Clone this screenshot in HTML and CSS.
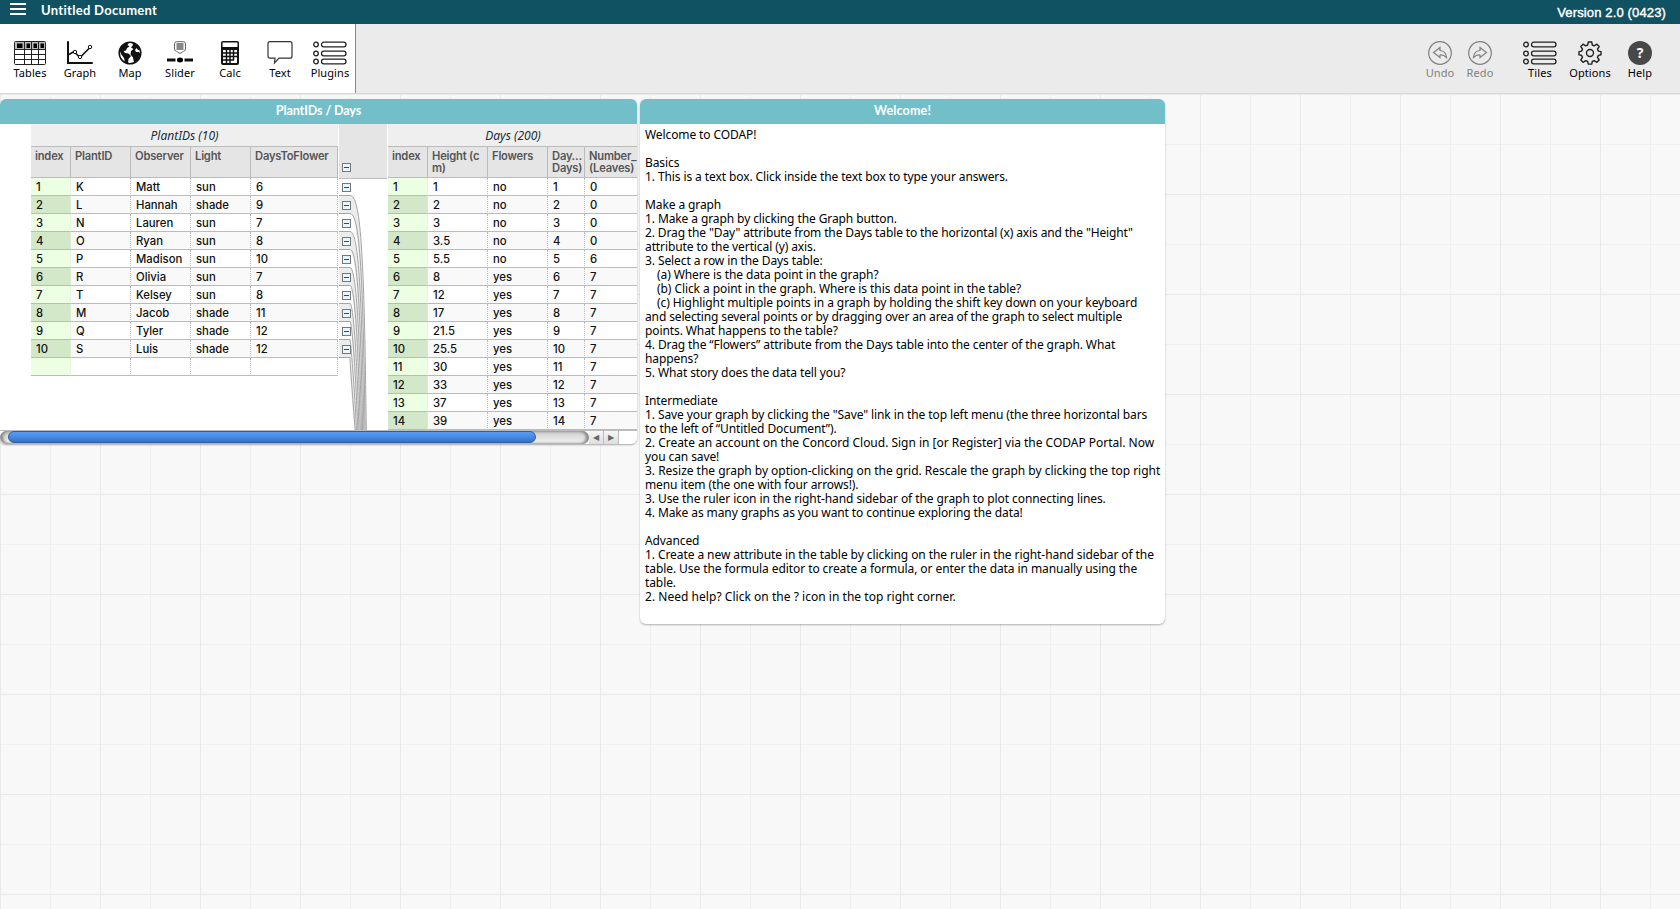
FILE: index.html
```html
<!DOCTYPE html>
<html lang="en">
<head>
<meta charset="utf-8">
<title>Untitled Document</title>
<link rel="stylesheet" href="styles.css">
</head>
<body>
<header class="topbar">
  <svg class="menu" width="16" height="13" viewBox="0 0 16 13"><path d="M0 1h16M0 6h16M0 11h16" stroke="#fff" stroke-width="2"/></svg>
  <span class="doc-title">Untitled Document</span>
  <span class="version">Version 2.0 (0423)</span>
</header>
<nav class="toolbar">
  <div class="tools">
    <div class="tool"><svg width="32" height="24" viewBox="0 0 32 24"><rect x=".5" y=".5" width="31" height="23" rx="1" fill="#fff" stroke="#222"/><path d="M1 1h30v7H1z" fill="#bbb"/><path d="M0 8.500h32M0 13.500h32M0 18.500h32M10.500 0v24M17.500 0v24M24.500 0v24" stroke="#222" fill="none"/><path d="M3 2.500h5.500v4.500H3zM12.500 2.500h3.500v4.500h-3.500zM19.500 2.500H23v4.500h-3.500zM26.500 2.500H30v4.500h-3.500z"/></svg><span>Tables</span></div>
    <div class="tool"><svg width="26" height="24" viewBox="0 0 26 24" fill="none" stroke="#111"><path d="M1 1v21h24" stroke-width="2" stroke-linecap="round"/><path d="M2 13.500l5-3 6 6 5-5 5-5" stroke-width="1.600"/><circle cx="8" cy="11" r="1.700" fill="#fff"/><circle cx="13" cy="16" r="1.700" fill="#fff"/><circle cx="23" cy="6" r="1.700" fill="#fff"/></svg><span>Graph</span></div>
    <div class="tool"><svg width="24" height="24" viewBox="0 0 24 24"><circle cx="12" cy="12" r="10.800" fill="#fff" stroke="#111" stroke-width="1.500"/><path d="M1.500 9C3 4 7 1.500 11 1.500L9.500 4l2 1.500L9 7 8 9.500 5.500 10 7 12l3.500.5L13 15l-2.500 3-.5 4.500L7 21.500 6 17 3 13zM14 1.500c4 .5 7 3.500 8.500 7L20 9l-1.500-2L17 9l1 2h3l1.500 2c-.5 4-3 7-6.500 8.500l-1-5-2.500-3L13 10l2.500-2L13 6.500 15 4z" fill="#111"/></svg><span>Map</span></div>
    <div class="tool"><svg width="26" height="24" viewBox="0 0 26 24"><path d="M9.500 .7h7q2 0 2 2V8q0 2-2 2.300L13 12.500 9.500 10.300q-2-.3-2-2.300V2.700q0-2 2-2z" fill="#fff" stroke="#666"/><rect x="9.500" y="2" width="7" height="7" fill="#888"/><path d="M0 19h8.500M17.500 19H26M10 19h6" stroke="#111" stroke-width="3"/><circle cx="13" cy="19" r="2.500"/></svg><span>Slider</span></div>
    <div class="tool"><svg width="20" height="24" viewBox="0 0 20 24"><rect x="1" y="0" width="18" height="24" rx="2" fill="#111"/><rect x="2.500" y="1.500" width="15" height="4.500" rx=".5" fill="#fff"/><path d="M3 9h14v13H3z" fill="#fff"/><path d="M6.500 8v15M10 8v15M13.500 8v11M2 12h16M2 15.500h16M2 19h12" stroke="#111" stroke-width="1.500"/></svg><span>Calc</span></div>
    <div class="tool"><svg width="26" height="24" viewBox="0 0 26 24"><path d="M3 .7h20q2 0 2 2v12.500q0 2-2 2H12L7.500 22l.5-4.800H3q-2 0-2-2V2.700q0-2 2-2z" fill="#fff" stroke="#333" stroke-width="1.200"/></svg><span>Text</span></div>
    <div class="tool"><svg width="34" height="24" viewBox="0 0 34 24" fill="none" stroke="#222" stroke-width="1.300"><circle cx="3" cy="3.500" r="2.300"/><circle cx="3" cy="12.500" r="2.300"/><circle cx="3" cy="20.500" r="2.300"/><rect x="8.500" y="1.200" width="24.500" height="4.600" rx="2.300"/><rect x="8.500" y="10.200" width="24.500" height="4.600" rx="2.300"/><rect x="8.500" y="18.200" width="24.500" height="4.600" rx="2.300"/></svg><span>Plugins</span></div>
  </div>
  <div class="actions">
    <div class="tool off undo"><svg width="24" height="24" viewBox="0 0 24 24" fill="none" stroke="#808080" stroke-width="1.200"><circle cx="12" cy="12" r="11.300"/><path d="M5.500 11.500L12 6.500v3q6 .5 6.500 7-3-3-6.500-2.500v2.500z"/></svg><span>Undo</span></div>
    <div class="tool off redo"><svg width="24" height="24" viewBox="0 0 24 24" fill="none" stroke="#808080" stroke-width="1.200"><circle cx="12" cy="12" r="11.300"/><path d="M18.500 11.500L12 6.500v3q-6 .5-6.500 7 3-3 6.500-2.500v2.500z"/></svg><span>Redo</span></div>
    <div class="tool"><svg width="34" height="24" viewBox="0 0 34 24" fill="none" stroke="#222" stroke-width="1.300"><circle cx="3" cy="3.500" r="2.300"/><circle cx="3" cy="12.500" r="2.300"/><circle cx="3" cy="20.500" r="2.300"/><rect x="8.500" y="1.200" width="24.500" height="4.600" rx="2.300"/><rect x="8.500" y="10.200" width="24.500" height="4.600" rx="2.300"/><rect x="8.500" y="18.200" width="24.500" height="4.600" rx="2.300"/></svg><span>Tiles</span></div>
    <div class="tool"><svg width="24" height="24" viewBox="0 0 24 24" fill="none" stroke="#222" stroke-width="1.400" stroke-linejoin="round"><path d="M10.300 1h3.400l.6 3 2 .9 2.600-1.700 2.300 2.300-1.700 2.600.9 2 2.600.5v3.200l-2.600.6-.9 2 1.700 2.600-2.300 2.300-2.600-1.700-2 .9-.6 2.600h-3.400l-.6-2.600-2-.9-2.600 1.700-2.300-2.300 1.700-2.600-.9-2-2.600-.6v-3.200l2.600-.5.9-2-1.700-2.600 2.300-2.300L7.700 4.900l2-.9z"/><circle cx="12" cy="12" r="3.500"/></svg><span>Options</span></div>
    <div class="tool"><svg width="24" height="24" viewBox="0 0 24 24"><circle cx="12" cy="12" r="12" fill="#484848"/><text class="q" x="12" y="17" text-anchor="middle">?</text></svg><span>Help</span></div>
  </div>
</nav>
<main class="workspace">
  <section class="tile table-tile">
    <h2 class="tile-title">PlantIDs / Days</h2>
    <div class="case-tables">
      <div class="collection plants"><div class="caption"><i>PlantIDs (10)</i></div><div class="grid" id="plants"></div></div>
      <div class="links" id="links"></div>
      <div class="collection days"><div class="caption"><i>Days (200)</i></div><div class="grid" id="days"></div></div>
    </div>
    <div class="scroll"><div class="track"><div class="thumb"></div></div><b class="arrow">◀</b><b class="arrow">▶</b></div>
  </section>
  <section class="tile text-tile">
    <h2 class="tile-title">Welcome!</h2>
    <div class="note">Welcome to CODAP!

Basics
1. This is a text box. Click inside the text box to type your answers.

Make a graph
1. Make a graph by clicking the Graph button.
<span class="snug">2. Drag the "Day" attribute from the Days table to the horizontal (x) axis and the "Height"</span>
attribute to the vertical (y) axis.
3. Select a row in the Days table:
<span class="sub">(a) Where is the data point in the graph?</span>
<span class="sub wide">(b) Click a point in the graph. Where is this data point in the table?</span>
<span class="sub wide">(c) Highlight multiple points in a graph by holding the shift key down on your keyboard</span>
<span class="snug">and selecting several points or by dragging over an area of the graph to select multiple</span>
points. What happens to the table?
4. Drag the “Flowers” attribute from the Days table into the center of the graph. What
happens?
5. What story does the data tell you?

Intermediate
1. Save your graph by clicking the "Save" link in the top left menu (the three horizontal bars
to the left of “Untitled Document”).
<span class="wider">2. Create an account on the Concord Cloud. Sign in [or Register] via the CODAP Portal. Now</span>
you can save!
<span class="wider">3. Resize the graph by option-clicking on the grid. Rescale the graph by clicking the top right</span>
menu item (the one with four arrows!).
<span class="wide">3. Use the ruler icon in the right-hand sidebar of the graph to plot connecting lines.</span>
4. Make as many graphs as you want to continue exploring the data!

Advanced
<span class="wide">1. Create a new attribute in the table by clicking on the ruler in the right-hand sidebar of the</span>
<span class="wide">table. Use the formula editor to create a formula, or enter the data in manually using the</span>
table.
<span class="widest">2. Need help? Click on the ? icon in the top right corner.</span></div>
  </section>
</main>
<script src="tables.js"></script>
</body>
</html>
```
FILE: styles.css
```css
* { box-sizing: border-box; }
body { margin: 0; width: 1680px; height: 909px; overflow: hidden; display: flex; flex-direction: column; font-family: "Noto Sans", sans-serif; font-size: 12px; color: #000; background: #f8f8f8; }
.topbar { height: 24px; flex: none; background: #105262; color: #fff; display: flex; align-items: flex-start; padding: 0 14px 0 10px; line-height: 20px; }
.menu { margin-top: 3px; }
.doc-title { margin-left: 15px; font: 700 13px/20px Lato, sans-serif; letter-spacing: .3px; }
.version { margin-left: auto; font: 13px/25px "Liberation Sans", sans-serif; -webkit-text-stroke: .4px #fff; letter-spacing: .14px; }
.toolbar { height: 70px; flex: none; display: flex; justify-content: space-between; background: #ebebeb; border-bottom: 1px solid #d8d8d8; }
.tools { display: flex; width: 356px; padding: 17px 0 0 5px; background: #fff; border-right: 1px solid #888; }
.tool { width: 50px; flex: none; display: flex; flex-direction: column; align-items: center; }
.tool svg { display: block; flex: none; }
.tool span { font: 11px/15px "Noto Sans", sans-serif; letter-spacing: .1px; white-space: nowrap; }
.actions { display: flex; padding: 17px 15px 0 0; }
.off { color: #808080; width: 40px; }
.redo { margin-right: 15px; }
.q { fill: #fff; font: 700 14px "Noto Sans", sans-serif; }
.workspace { flex: 1; display: flex; align-items: flex-start; gap: 3px; padding-top: 5px; background-color: #f8f8f8; background-image: linear-gradient(90deg, #e9e9e9 0 1px, transparent 1px 50px, #f0f0f0 50px 51px, transparent 51px), linear-gradient(#e9e9e9 0 1px, transparent 1px 50px, #f0f0f0 50px 51px, transparent 51px); background-size: 100px 100px; }
.tile { background: #fff; border-radius: 6px; overflow: hidden; box-shadow: 0 1px 2px rgba(0,0,0,.3); }
.table-tile { width: 637px; height: 345px; }
.text-tile { width: 525px; height: 525px; }
.tile-title { margin: 0; height: 25px; background: #72bfca; color: #fff; text-align: center; font: 700 12.500px/24px Lato, sans-serif; letter-spacing: -.1px; }
.text-tile .tile-title { letter-spacing: .15px; }
.note { padding: 4px 5px; white-space: pre; font-size: 12px; line-height: 14px; letter-spacing: -.1px; }
.sub { padding-left: 12px; }
.snug { letter-spacing: -.13px; }
.wide { letter-spacing: -.08px; }
.wider { letter-spacing: -.02px; }
.widest { letter-spacing: .03px; }
.case-tables { height: 306px; display: flex; padding-left: 31px; overflow: hidden; font-family: Inter, sans-serif; }
.collection { flex: none; }
.plants { width: 307px; }
.days { width: 330px; background: linear-gradient(#efefef 22px, transparent 22px); }
.links { flex: none; width: 50px; }
.caption { height: 22px; background: #efefef; text-align: center; line-height: 24px; font-family: "Noto Sans", sans-serif; font-size: 12px; color: #15303c; }
.days .caption { width: 250px; }
.grid { display: grid; }
.plants .grid { grid-template-columns: 40px 60px 60px 60px 87px; }
.days .grid { grid-template-columns: 40px 60px 60px 37px 133px; }
.head { height: 32px; background: #e5e5e5; border: solid #bbb; border-width: 1px 1px 1px 0; padding: 3px 0 0 4px; font-size: 11.200px; line-height: 12px; font-weight: 600; letter-spacing: -.2px; color: #555; white-space: pre; overflow: hidden; }
.cell { height: 18px; border-right: 1px dotted #bbb; border-bottom: 1px solid #bbb; padding: 1px 0 0 5px; line-height: 17px; font-size: 11.300px; font-weight: 500; color: #111; }
.alt { background: #f9f9f9; }
.idx { background: #edffe2; border-right-color: #dfeed8; }
.idx.alt { background: #d3e8c8; }
.scroll { height: 14px; display: flex; border-top: 1px solid #bbb; }
.track { width: 589px; padding: 0 0 0 8px; border-radius: 7px; background: linear-gradient(#ccc, #f6f6f6); box-shadow: inset -3px 0 3px #888, inset 3px 0 3px #888; }
.thumb { width: 528px; height: 12px; border-radius: 6px; background: linear-gradient(#5a9cf5, #4a8ce3 45%, #3273c8); border: 1px solid #315f9e; }
.arrow { width: 15px; background: linear-gradient(#f6f6f6, #ddd); border-right: 1px solid #bbb; color: #666; font: 8px/13px "DejaVu Sans", sans-serif; text-align: center; }
```
FILE: tables.js
```js
const plants = [['K','Matt','sun',6],['L','Hannah','shade',9],['N','Lauren','sun',7],['O','Ryan','sun',8],['P','Madison','sun',10],['R','Olivia','sun',7],['T','Kelsey','sun',8],['M','Jacob','shade',11],['Q','Tyler','shade',12],['S','Luis','shade',12],['','','','']];
const heights = [1,2,3,3.5,5.5,8,12,17,21.5,25.5,30,33,37,39];
const days = heights.map((h, i) => [h, i < 5 ? 'no' : 'yes', i + 1, i < 4 ? 0 : i === 4 ? 6 : 7]);

function fill(id, heads, rows) {
  let html = heads.map(h => `<div class="head">${h}</div>`).join('');
  rows.forEach((row, i) => {
    const alt = i % 2 ? ' alt' : '';
    html += `<div class="cell idx${alt}">${row[0] === '' ? '' : i + 1}</div>`;
    html += row.map(v => `<div class="cell${alt}">${v}</div>`).join('');
  });
  document.getElementById(id).innerHTML = html;
}
fill('plants', ['index', 'PlantID', 'Observer', 'Light', 'DaysToFlower'], plants);
fill('days', ['index', 'Height (c\nm)', 'Flowers', 'Day…\nDays)', 'Number_\n(Leaves)'], days);

// Bands joining each parent row to its child rows, with an expand box per row.
const box = y => `<rect x="4.500" y="${y - 4}" width="8" height="8" fill="#e6f6ff" stroke="#777"/><path d="M6 ${y}h5" stroke="#15568a"/>`;
const edge = i => {
  const y = 53.5 + 18 * i, x = 29.5 - i * 1.2;
  return { y, curve: `H12C${x - 6} ${y} ${x - 2} ${y + 50} ${x} 310` };
};
let svg = '<rect x="1" width="48" height="54" fill="#e5e5e5"/><path d="M1 54.500h48" stroke="#bbb"/>';
for (let i = 1; i < 10; i += 2) {
  const { y, curve } = edge(i);
  svg += `<path d="M1 ${y}${curve}h-2C${25 - i * 1.2} ${y + 68} ${20 - i} ${y + 18} 12 ${y + 18}H1z" fill="#ececec"/>`;
}
for (let i = 1; i <= 10; i++) {
  const { y, curve } = edge(i);
  svg += `<path d="M1 ${y}${curve}" fill="none" stroke="#a4a4a4"/>`;
}
svg += box(43.5);
for (let i = 0; i < 10; i++) svg += box(63.5 + 18 * i);
document.getElementById('links').innerHTML = `<svg width="50" height="306">${svg}</svg>`;
```
